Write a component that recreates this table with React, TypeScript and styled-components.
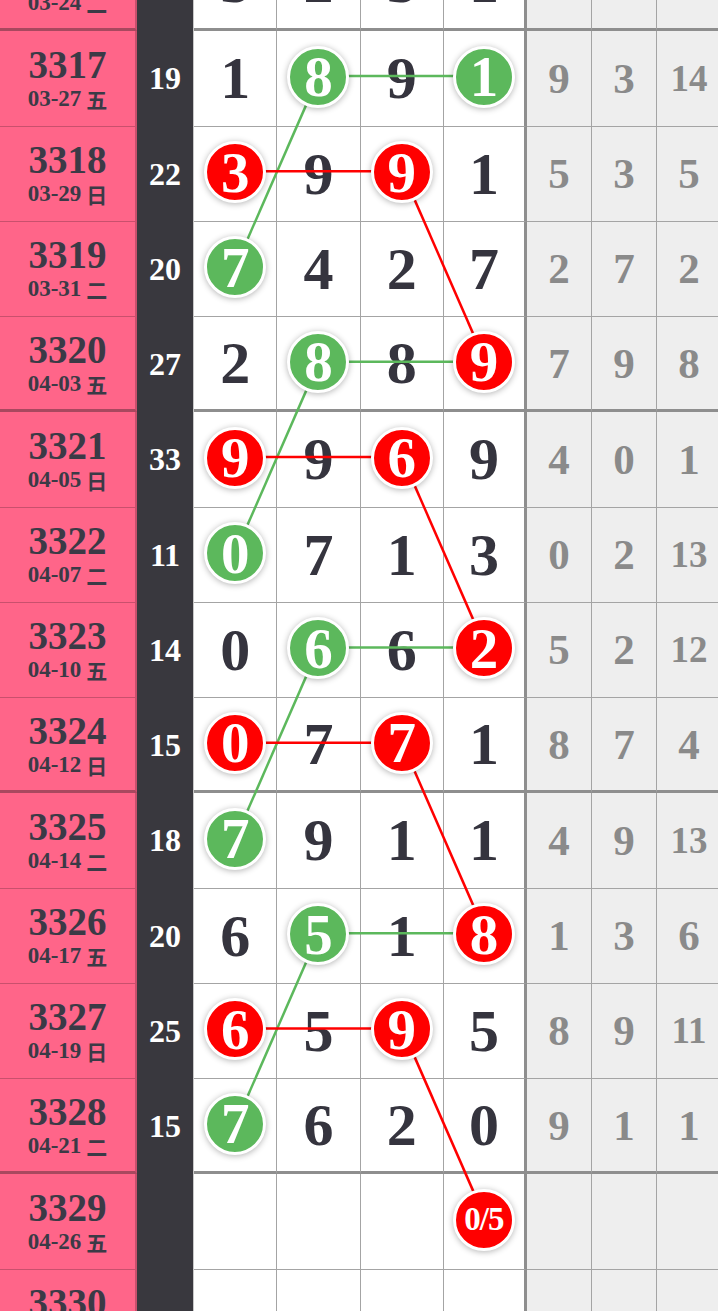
import styled, { createGlobalStyle } from 'styled-components';

const ROW_H = 95.25;
const PINK_W = 137;
const DARK_W = 57;
const DIGIT_W = 83.25;
const GRAY_W = 65;

const GlobalStyle = createGlobalStyle`
  html, body {
    margin: 0;
    padding: 0;
    background: #ffffff;
    overflow: hidden;
  }
  body {
    font-family: "Liberation Serif", "Noto Sans CJK SC", serif;
  }
`;

type BallColor = 'green' | 'red';
type Ball = { col: number; color: BallColor; text?: string };

type Draw = {
  issue: string;
  date: string;
  week: string;
  sum?: number;
  digits: (number | null)[];
  balls: Ball[];
  gaps: (number | null)[];
};

const draws: Draw[] = [
  { issue: '3316', date: '03-24', week: '二', sum: 17, digits: [3, 2, 3, 1], balls: [], gaps: [6, 2, 9] },
  { issue: '3317', date: '03-27', week: '五', sum: 19, digits: [1, 8, 9, 1], balls: [{ col: 1, color: 'green' }, { col: 3, color: 'green' }], gaps: [9, 3, 14] },
  { issue: '3318', date: '03-29', week: '日', sum: 22, digits: [3, 9, 9, 1], balls: [{ col: 0, color: 'red' }, { col: 2, color: 'red' }], gaps: [5, 3, 5] },
  { issue: '3319', date: '03-31', week: '二', sum: 20, digits: [7, 4, 2, 7], balls: [{ col: 0, color: 'green' }], gaps: [2, 7, 2] },
  { issue: '3320', date: '04-03', week: '五', sum: 27, digits: [2, 8, 8, 9], balls: [{ col: 1, color: 'green' }, { col: 3, color: 'red' }], gaps: [7, 9, 8] },
  { issue: '3321', date: '04-05', week: '日', sum: 33, digits: [9, 9, 6, 9], balls: [{ col: 0, color: 'red' }, { col: 2, color: 'red' }], gaps: [4, 0, 1] },
  { issue: '3322', date: '04-07', week: '二', sum: 11, digits: [0, 7, 1, 3], balls: [{ col: 0, color: 'green' }], gaps: [0, 2, 13] },
  { issue: '3323', date: '04-10', week: '五', sum: 14, digits: [0, 6, 6, 2], balls: [{ col: 1, color: 'green' }, { col: 3, color: 'red' }], gaps: [5, 2, 12] },
  { issue: '3324', date: '04-12', week: '日', sum: 15, digits: [0, 7, 7, 1], balls: [{ col: 0, color: 'red' }, { col: 2, color: 'red' }], gaps: [8, 7, 4] },
  { issue: '3325', date: '04-14', week: '二', sum: 18, digits: [7, 9, 1, 1], balls: [{ col: 0, color: 'green' }], gaps: [4, 9, 13] },
  { issue: '3326', date: '04-17', week: '五', sum: 20, digits: [6, 5, 1, 8], balls: [{ col: 1, color: 'green' }, { col: 3, color: 'red' }], gaps: [1, 3, 6] },
  { issue: '3327', date: '04-19', week: '日', sum: 25, digits: [6, 5, 9, 5], balls: [{ col: 0, color: 'red' }, { col: 2, color: 'red' }], gaps: [8, 9, 11] },
  { issue: '3328', date: '04-21', week: '二', sum: 15, digits: [7, 6, 2, 0], balls: [{ col: 0, color: 'green' }], gaps: [9, 1, 1] },
  { issue: '3329', date: '04-26', week: '五', digits: [null, null, null, null], balls: [{ col: 3, color: 'red', text: '0/5' }], gaps: [null, null, null] },
  { issue: '3330', date: '04-28', week: '日', digits: [null, null, null, null], balls: [], gaps: [null, null, null] },
];

// [rowA, colA, rowB, colB, colour]
const links: [number, number, number, number, BallColor][] = [
  [1, 1, 1, 3, 'green'],
  [1, 1, 3, 0, 'green'],
  [2, 0, 2, 2, 'red'],
  [2, 2, 4, 3, 'red'],
  [4, 1, 4, 3, 'green'],
  [4, 1, 6, 0, 'green'],
  [5, 0, 5, 2, 'red'],
  [5, 2, 7, 3, 'red'],
  [7, 1, 7, 3, 'green'],
  [7, 1, 9, 0, 'green'],
  [8, 0, 8, 2, 'red'],
  [8, 2, 10, 3, 'red'],
  [10, 1, 10, 3, 'green'],
  [10, 1, 12, 0, 'green'],
  [11, 0, 11, 2, 'red'],
  [11, 2, 13, 3, 'red'],
];

const BALL_BG: Record<BallColor, string> = {
  green: '#5cb85c',
  red: '#ff0000',
};

const Board = styled.div`
  position: relative;
  margin-top: -64px;
  width: 718px;
  overflow: hidden;
`;

const Row = styled.div`
  display: grid;
  grid-template-columns: ${PINK_W}px ${DARK_W}px repeat(4, ${DIGIT_W}px) repeat(3, ${GRAY_W}px);
  height: ${ROW_H}px;
`;

const IssueCell = styled.div<{ $end: boolean }>`
  box-sizing: border-box;
  background: #ff6589;
  border-right: 2px solid #c9506d;
  border-bottom: ${p => (p.$end ? '3px solid #a9485f' : '1px solid #c9506d')};
  display: flex;
  flex-direction: column;
  align-items: center;
  justify-content: center;
  color: #3b3a46;
  font-weight: bold;
`;

const IssueNo = styled.div`
  font-size: 39px;
  line-height: 38px;
`;

const IssueDate = styled.div`
  font-size: 23px;
  line-height: 24px;
  margin-top: 3px;
  display: flex;
  align-items: center;
  gap: 5px;
`;

const Week = styled.span`
  font-family: "Noto Sans CJK SC", sans-serif;
  font-size: 21px;
  font-weight: 700;
`;

const SumCell = styled.div`
  box-sizing: border-box;
  background: #39383e;
  border-right: 1px solid #c8c8c8;
  display: flex;
  align-items: center;
  justify-content: center;
  color: #ffffff;
  font-size: 32px;
  font-weight: bold;
`;

const DigitCell = styled.div<{ $end: boolean; $last: boolean }>`
  box-sizing: border-box;
  background: #ffffff;
  border-right: ${p => (p.$last ? '3px solid #8e8e8e' : '1px solid #a4a4a4')};
  border-bottom: ${p => (p.$end ? '3px solid #8e8e8e' : '1px solid #a4a4a4')};
  display: flex;
  align-items: center;
  justify-content: center;
  color: #35343e;
  font-size: 60px;
  font-weight: bold;
  line-height: 1;
`;

const GapCell = styled.div<{ $end: boolean; $long: boolean }>`
  box-sizing: border-box;
  background: #eeeeee;
  border-right: 1px solid #a4a4a4;
  border-bottom: ${p => (p.$end ? '3px solid #8e8e8e' : '1px solid #a4a4a4')};
  display: flex;
  align-items: center;
  justify-content: center;
  color: #8a8a8a;
  font-size: ${p => (p.$long ? '37px' : '43px')};
  font-weight: bold;
  line-height: 1;
`;

const BallMark = styled.div<{ $color: BallColor; $small: boolean }>`
  position: relative;
  z-index: 2;
  box-sizing: border-box;
  width: 62px;
  height: 62px;
  border-radius: 50%;
  border: 3px solid #ffffff;
  background: ${p => BALL_BG[p.$color]};
  box-shadow: 0 1px 6px rgba(0, 0, 0, 0.3);
  display: flex;
  align-items: center;
  justify-content: center;
  color: #ffffff;
  font-size: ${p => (p.$small ? '33px' : '57px')};
  letter-spacing: ${p => (p.$small ? '-1px' : '0')};
  font-weight: bold;
  margin-top: -3px;
`;

const Links = styled.svg`
  position: absolute;
  left: 0;
  top: 0;
  z-index: 1;
  pointer-events: none;
`;

const cx = (col: number) => PINK_W + DARK_W + col * DIGIT_W + DIGIT_W / 2;
const cy = (row: number) => row * ROW_H + ROW_H / 2 - 3;

export default function App() {
  return (
    <>
      <GlobalStyle />
      <Board>
        {draws.map(d => {
          const end = (Number(d.issue) - 3316) % 4 === 0;
          return (
            <Row key={d.issue}>
              <IssueCell $end={end}>
                <IssueNo>{d.issue}</IssueNo>
                <IssueDate>
                  {d.date}
                  <Week>{d.week}</Week>
                </IssueDate>
              </IssueCell>
              <SumCell>{d.sum ?? ''}</SumCell>
              {d.digits.map((v, c) => {
                const ball = d.balls.find(b => b.col === c);
                return (
                  <DigitCell key={c} $end={end} $last={c === 3}>
                    {ball ? (
                      <BallMark $color={ball.color} $small={!!ball.text}>
                        {ball.text ?? v}
                      </BallMark>
                    ) : (
                      v ?? ''
                    )}
                  </DigitCell>
                );
              })}
              {d.gaps.map((g, c) => (
                <GapCell key={c} $end={end} $long={g !== null && g > 9}>
                  {g ?? ''}
                </GapCell>
              ))}
            </Row>
          );
        })}
        <Links width={718} height={draws.length * ROW_H}>
          {links.map(([ra, ca, rb, cb, color], i) => (
            <line
              key={i}
              x1={cx(ca)}
              y1={cy(ra)}
              x2={cx(cb)}
              y2={cy(rb)}
              stroke={BALL_BG[color]}
              strokeWidth={2.5}
            />
          ))}
        </Links>
      </Board>
    </>
  );
}
